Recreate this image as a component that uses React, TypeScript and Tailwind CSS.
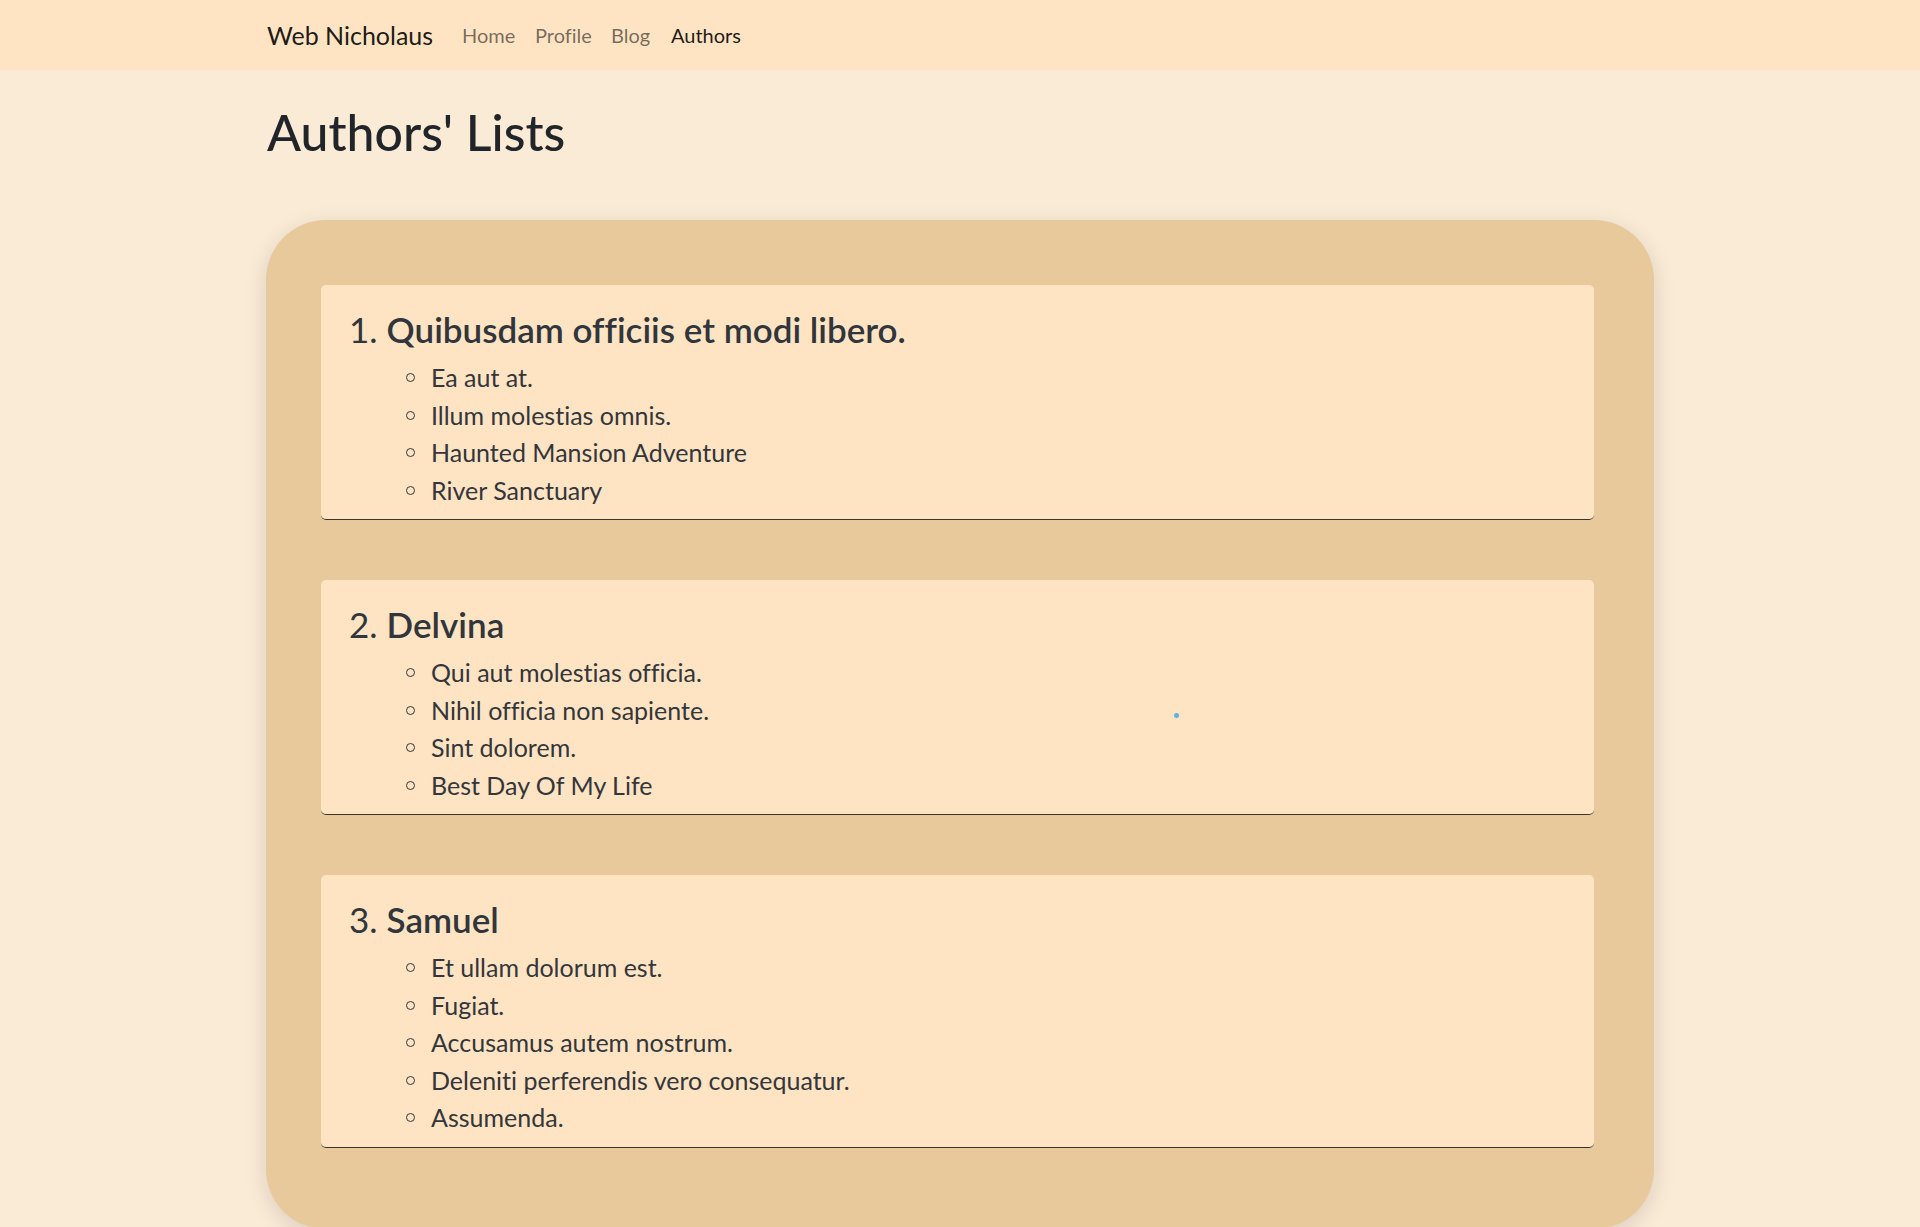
import React from "react";

type Author = { name: string; items: string[] };

const authors: Author[] = [
  {
    name: "Quibusdam officiis et modi libero.",
    items: ["Ea aut at.", "Illum molestias omnis.", "Haunted Mansion Adventure", "River Sanctuary"],
  },
  {
    name: "Delvina",
    items: ["Qui aut molestias officia.", "Nihil officia non sapiente.", "Sint dolorem.", "Best Day Of My Life"],
  },
  {
    name: "Samuel",
    items: [
      "Et ullam dolorum est.",
      "Fugiat.",
      "Accusamus autem nostrum.",
      "Deleniti perferendis vero consequatur.",
      "Assumenda.",
    ],
  },
];

export default function App() {
  return (
    <div
      className="min-h-[1227px] bg-[#faebd7] text-[#212529] [font-variant-ligatures:none]"
      style={{ fontFamily: "Lato, 'Noto Sans', sans-serif" }}
    >
      <nav className="h-[70px] bg-[#ffe4c4]">
        <div className="mx-auto flex h-full w-[1388px] items-center pl-[1px]">
          <a className="mr-[20px] w-[165px] shrink-0 whitespace-nowrap text-[25px] leading-[36px] text-black/90">
            Web Nicholaus
          </a>
          <a className="w-[73px] shrink-0 px-[10px] text-[20px] leading-[30px] text-black/55">Home</a>
          <a className="w-[76px] shrink-0 px-[10px] text-[20px] leading-[30px] text-black/55">Profile</a>
          <a className="w-[60px] shrink-0 px-[10px] text-[20px] leading-[30px] text-black/55">Blog</a>
          <a className="shrink-0 px-[10px] text-[20px] leading-[30px] text-black/90">Authors</a>
        </div>
      </nav>

      <main className="mx-auto w-[1388px]">
        <h1 className="mt-[32px] pl-[1px] text-[50px] font-medium leading-[60px] text-[#212529]">
          Authors' Lists
        </h1>

        <section className="mt-[58px] flex flex-col gap-[60px] rounded-[60px] bg-[#e8c99b] pb-[81px] pl-[55px] pr-[60px] pt-[65px] shadow-[0_6px_22px_rgba(0,0,0,0.13)]">
          {authors.map((a, i) => (
            <div
              key={a.name}
              className="relative rounded-[5px] border-b border-[#3b342d] bg-[#ffe4c4] pb-[10px] pl-[28px] pt-[23px]"
            >
              <h3 className="mb-[9px] flex text-[35px] leading-[42px] text-[#30363b]">
                <span className="mr-[9px] font-normal">{i + 1}.</span>
                <span className="font-semibold">{a.name}</span>
              </h3>
              <ul>
                {a.items.map((it) => (
                  <li key={it} className="flex items-center pl-[57px] text-[25px] leading-[37.5px] text-[#33363a]">
                    <span className="mr-[16px] h-[9px] w-[9px] rounded-full border-[1.5px] border-[#33363a]" />
                    <span>{it}</span>
                  </li>
                ))}
              </ul>
              {i === 1 && (
                <span className="absolute left-[853px] top-[133px] h-[5px] w-[5px] rounded-full bg-[#5bb3e0]" />
              )}
            </div>
          ))}
        </section>
      </main>
    </div>
  );
}
